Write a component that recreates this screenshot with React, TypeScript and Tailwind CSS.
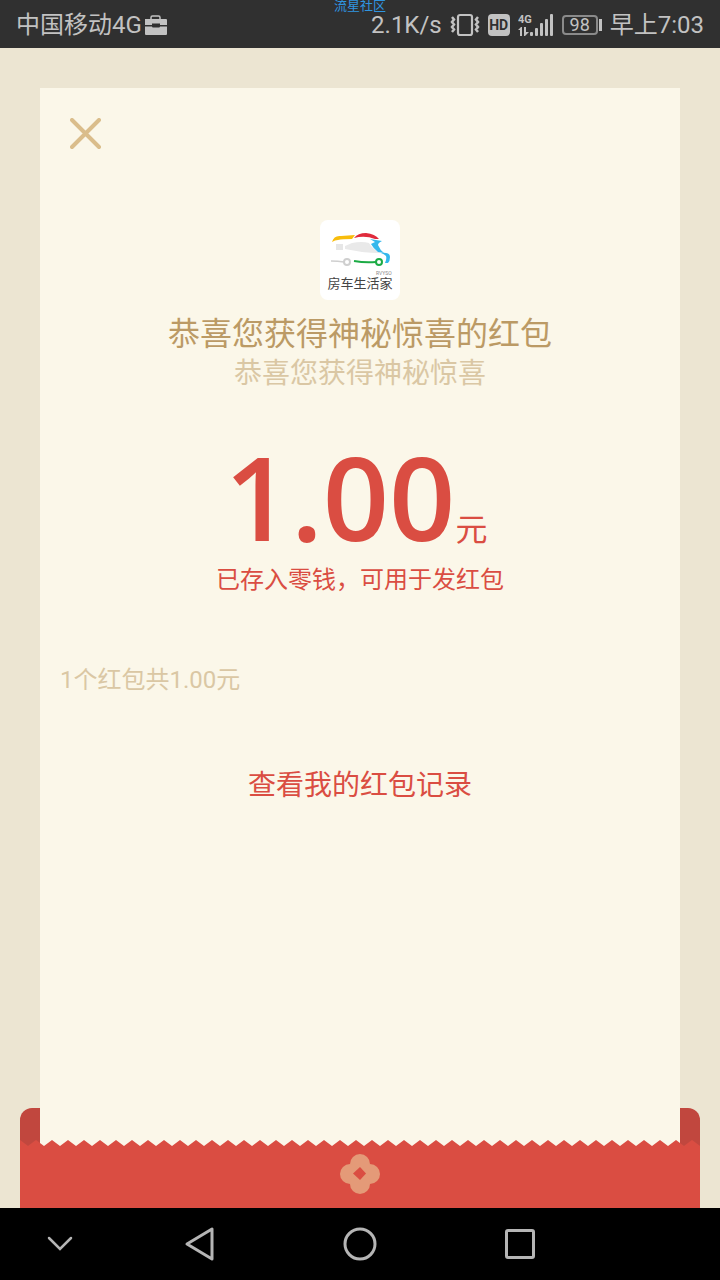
// Status bar icons
function BriefcaseIcon() {
  return (
    <svg viewBox="0 0 24 20" className="h-5 w-6" aria-hidden="true">
      <path d="M7 5V2.500Q7 1 8.500 1h6Q16 1 16 2.500V5" fill="none" stroke="#c2c2c2" strokeWidth="1.500" />
      <path d="M1 4h21q1 0 1 1v5h-7V8.500H8V10H1V5q0-1 0-1z" fill="#c2c2c2" />
      <path d="M1 11.500h7q0 1 1 1h6q1 0 1-1h7V19q0 1-1 1H2q-1 0-1-1z" fill="#c2c2c2" />
    </svg>
  );
}

function VibrateIcon() {
  return (
    <svg viewBox="0 0 30 24" className="h-6 w-[30px]" fill="none" stroke="#c2c2c2" aria-hidden="true">
      <rect x="8" y="2" width="14" height="20" rx="2" strokeWidth="2.200" />
      <path d="M2 4l2 2.500-2 2.500 2 2.500-2 2.500 2 2.500-2 2.500M28 4l-2 2.500 2 2.500-2 2.500 2 2.500-2 2.500 2 2.500" strokeWidth="2.500" />
    </svg>
  );
}

function SignalIcon() {
  return (
    <svg viewBox="0 0 36 24" className="h-6 w-9" fill="#c2c2c2" aria-hidden="true">
      <text x="0" y="10" fontSize="11" fontWeight="700" className="font-['Roboto',sans-serif]">4G</text>
      <path d="M0 17l3-3h1v9H2v-6zM6 14h2v5h3l-4 4H6z" />
      <rect x="12" y="19" width="3" height="4" rx="1" />
      <rect x="17" y="15" width="3" height="8" rx="1" />
      <rect x="22" y="10" width="3" height="13" rx="1" />
      <rect x="27" y="6" width="3" height="17" rx="1" />
      <rect x="32" y="1" width="3" height="22" rx="1" />
    </svg>
  );
}

function Avatar() {
  return (
    <div className="mt-[70px] flex h-20 w-20 flex-col items-center rounded-lg bg-white">
      <svg viewBox="0 0 80 56" className="h-14 w-20" fill="none" aria-hidden="true">
        <path d="M25 26L32 23Q42 21 49 23Q52 29 61 33Q50 33 42 32L25 29z" fill="#e9e9e9" />
        <path d="M16 24h7v6h-7z" fill="#e6e6e6" />
        <path d="M12 22Q14 15 21 16L35 15 32 19Q22 19 18 20Q15 20 12 22z" fill="#f8bd0c" />
        <path d="M34 18Q38 13 46 13Q55 14 59 19L55 19Q45 15 34 18z" fill="#e02b3c" />
        <path d="M50 19L62 21Q58 23 58 25Q60 30 64 33L58 32Q53 28 51 24L55 22z" fill="#35b8ec" />
        <path d="M61 33Q70 32 70 37Q70 41 68 43L65 43Q67 39 66 36Q64 34 61 33z" fill="#35b8ec" />
        <path d="M11 41Q18 41 24 42" stroke="#cfcfcf" strokeWidth="1.500" />
        <circle cx="27" cy="42" r="3" stroke="#cfcfcf" strokeWidth="2" />
        <path d="M34 41Q45 43 56 42" stroke="#1cab45" strokeWidth="2" />
        <circle cx="59" cy="42" r="3" stroke="#1cab45" strokeWidth="2" />
        <text x="56" y="55" fontSize="5" fill="#888888" className="font-['Roboto',sans-serif]">RVYSO</text>
      </svg>
      <span className="text-[13px] leading-4 text-[#444444]">房车生活家</span>
    </div>
  );
}

function StatusBar() {
  return (
    <header className="relative flex h-12 shrink-0 items-center justify-between bg-[#303030] px-4 pt-0.5 text-2xl text-[#c2c2c2]">
      <div className="flex items-center gap-0.5">
        <span>中国移动4G</span>
        <BriefcaseIcon />
      </div>
      <span className="absolute inset-x-0 top-0 text-center text-[13px] leading-3 text-[#2f95e0]">流星社区</span>
      <div className="flex items-center gap-2">
        <span>2.1K/s</span>
        <VibrateIcon />
        <span className="flex h-[22px] w-[22px] items-center justify-center rounded-sm bg-[#c2c2c2] text-sm font-bold text-[#303030]">
          HD
        </span>
        <SignalIcon />
        <div className="flex items-center gap-px">
          <span className="flex h-5 w-9 items-center justify-center rounded-sm border-2 border-[#8a8a8a] text-lg">98</span>
          <span className="h-3 w-[3px] bg-[#c2c2c2]" />
        </div>
        <span>早上7:03</span>
      </div>
    </header>
  );
}

function Card() {
  return (
    <section className="relative z-10 mx-5 flex flex-1 flex-col items-center bg-[#fbf7e9] pb-20">
      <button aria-label="关闭" className="mt-[30px] ml-[30px] self-start">
        <svg viewBox="0 0 32 32" className="h-8 w-8" stroke="#dabd8b" strokeWidth="4" strokeLinecap="round" aria-hidden="true">
          <path d="M2 2L29 29M29 2L2 29" />
        </svg>
      </button>

      <Avatar />

      <h1 className="mt-[14px] text-[32px] leading-10 text-[#bb9a65]">恭喜您获得神秘惊喜的红包</h1>
      <p className="text-[28px] leading-10 text-[#dac7a4]">恭喜您获得神秘惊喜</p>

      <p className="mt-[42px] flex items-baseline pr-2 text-[#da4d42]">
        <span className="font-['Open_Sans',sans-serif] text-[116px] leading-[120px] font-semibold">1.00</span>
        <span className="text-[32px] leading-10">元</span>
      </p>
      <p className="mt-2 text-2xl leading-8 text-[#da4d42]">已存入零钱，可用于发红包</p>

      <p className="mt-[68px] self-start pl-5 text-2xl leading-8 text-[#dac7a4]">1个红包共1.00元</p>

      <a href="#" className="mt-[70px] text-[28px] leading-10 text-[#da4d42]">查看我的红包记录</a>
    </section>
  );
}

// Front of the envelope, with the torn edge and the flower seal
function Envelope() {
  return (
    <div className="relative z-20 -mt-[6px]">
      <svg className="block h-[6px] w-full" aria-hidden="true">
        <defs>
          <pattern id="teeth" width="16" height="6" patternUnits="userSpaceOnUse">
            <path d="M0 0L8 6L16 0V6H0z" fill="#da4d42" />
          </pattern>
        </defs>
        <rect width="100%" height="6" fill="url(#teeth)" />
      </svg>
      <div className="flex h-[62px] justify-center bg-[#da4d42] pt-2">
        <svg viewBox="0 0 40 40" className="h-10 w-10" fill="#e49a78" aria-hidden="true">
          <circle cx="20" cy="10" r="10" />
          <circle cx="10" cy="20" r="10" />
          <circle cx="30" cy="20" r="10" />
          <circle cx="20" cy="30" r="10" />
          <path d="M20 13L26 19.500L20 26L13 19.500z" fill="#da4d42" />
        </svg>
      </div>
    </div>
  );
}

function NavBar() {
  return (
    <nav className="grid h-[72px] shrink-0 grid-cols-[120px_1fr_1fr_1fr_120px] items-center justify-items-center bg-black">
      <button aria-label="收起">
        <svg viewBox="0 0 32 32" className="h-8 w-8" fill="none" stroke="#b5b5b5" strokeWidth="2.500" strokeLinecap="round" aria-hidden="true">
          <path d="M5 10L16 21L27 10" />
        </svg>
      </button>
      <button aria-label="返回">
        <svg viewBox="0 0 36 36" className="h-9 w-9" fill="none" stroke="#b5b5b5" strokeWidth="3" strokeLinejoin="round" aria-hidden="true">
          <path d="M5 18L30 3V33z" />
        </svg>
      </button>
      <button aria-label="主页">
        <svg viewBox="0 0 36 36" className="h-9 w-9" fill="none" stroke="#b5b5b5" strokeWidth="3" aria-hidden="true">
          <circle cx="18" cy="18" r="15" />
        </svg>
      </button>
      <button aria-label="最近任务">
        <svg viewBox="0 0 36 36" className="h-9 w-9" fill="none" stroke="#b5b5b5" strokeWidth="3" aria-hidden="true">
          <rect x="4.500" y="4.500" width="27" height="27" rx="1.500" />
        </svg>
      </button>
    </nav>
  );
}

export default function App() {
  return (
    <div className="flex min-h-screen flex-col font-['Roboto','Noto_Sans_CJK_SC',sans-serif]">
      <StatusBar />
      <main className="relative flex flex-1 flex-col bg-[#ece5d2] px-5 pt-10">
        {/* Back of the envelope, behind the card */}
        <div className="absolute inset-x-5 bottom-0 h-[100px] rounded-t-xl bg-[#c1473e]" />
        <Card />
        <Envelope />
      </main>
      <NavBar />
    </div>
  );
}
